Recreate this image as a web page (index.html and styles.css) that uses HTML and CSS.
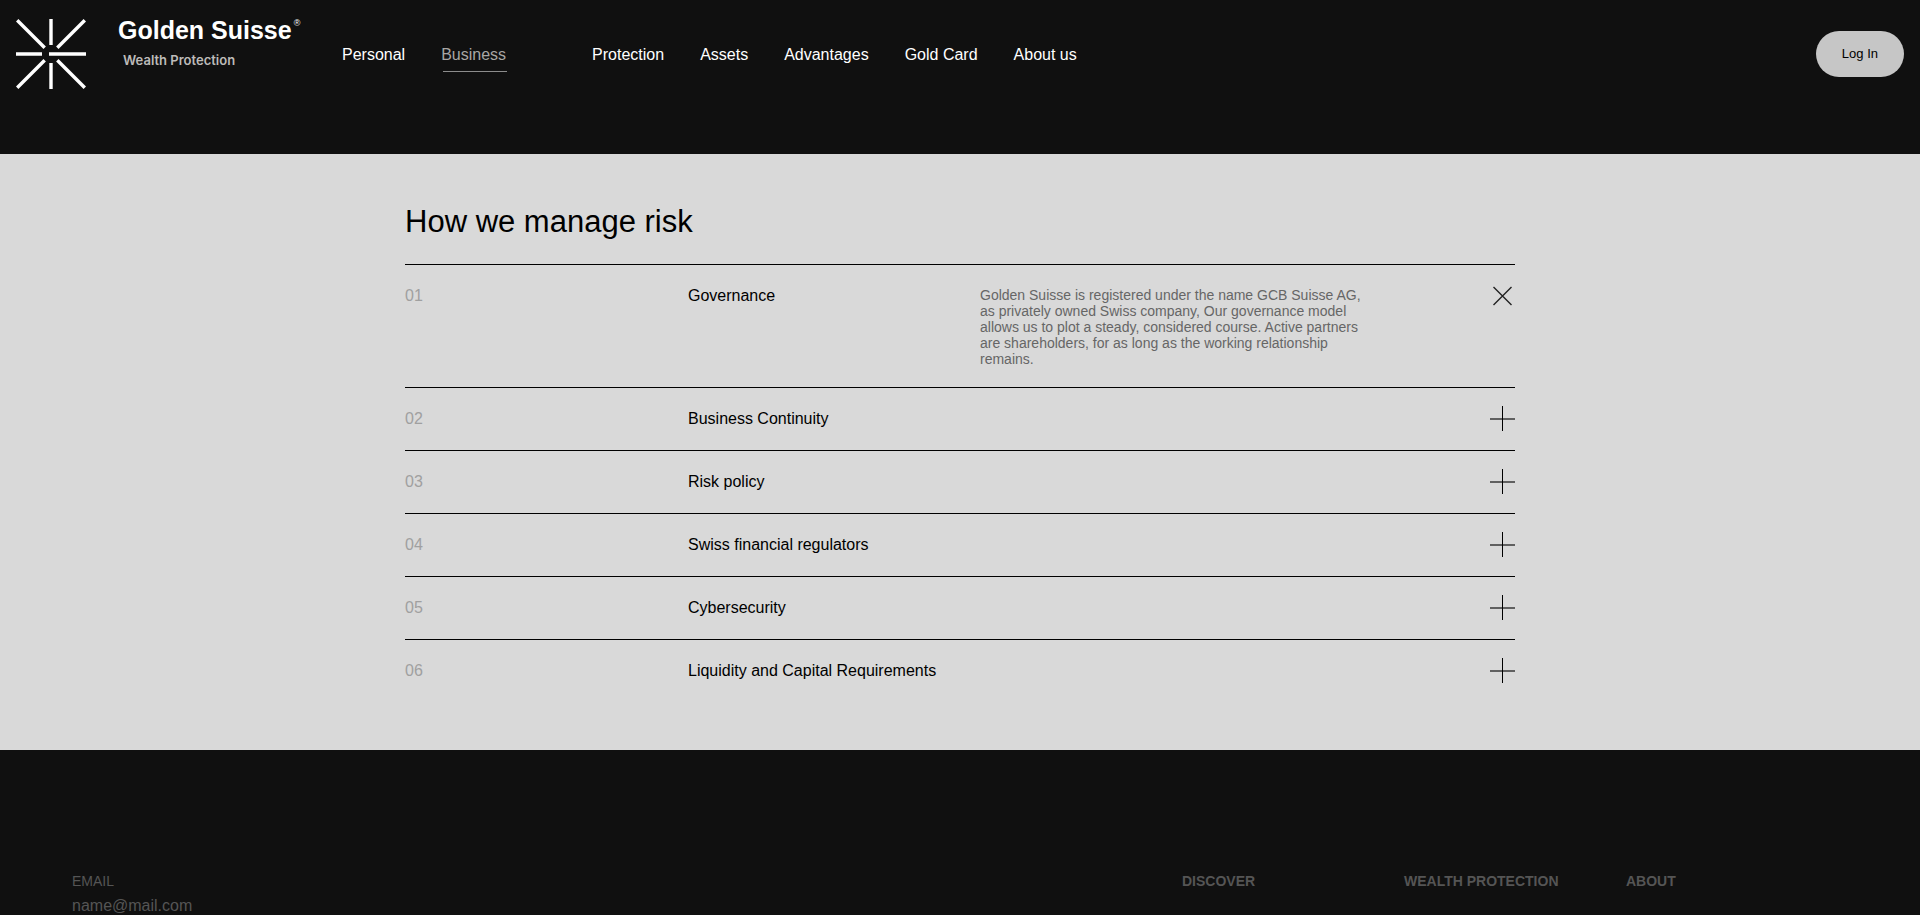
FILE: index.html
```
<!DOCTYPE html>
<html lang="en">
<head>
<meta charset="utf-8">
<title>Golden Suisse – How we manage risk</title>
<link rel="stylesheet" href="styles.css">
</head>
<body>
<header class="header">
  <a class="brand" href="#">
    <svg class="brand-mark" viewBox="0 0 70 70" aria-hidden="true">
      <path d="M35 0V26M35 44V70M0 35H26M33 35H70M1.2 1.2L28.7 28.7M68.800 1.2L41.300 28.7M1.200 68.800L28.700 41.300M68.800 68.800L41.300 41.300"/>
    </svg>
    <span class="brand-text">
      <span class="brand-name">Golden Suisse<sup class="brand-reg">®</sup></span>
      <span class="brand-sub">Wealth Protection</span>
    </span>
  </a>
  <nav class="nav">
    <div class="nav-group">
      <a class="nav-link" href="#">Personal</a>
      <a class="nav-link nav-link-active" href="#">Business</a>
    </div>
    <div class="nav-group">
      <a class="nav-link" href="#">Protection</a>
      <a class="nav-link" href="#">Assets</a>
      <a class="nav-link" href="#">Advantages</a>
      <a class="nav-link" href="#">Gold Card</a>
      <a class="nav-link" href="#">About us</a>
    </div>
  </nav>
  <button class="login" type="button">Log In</button>
</header>

<main class="main">
  <section class="risk">
    <h1 class="title">How we manage risk</h1>
    <div class="item">
      <span class="num">01</span>
      <h2 class="name">Governance</h2>
      <p class="desc">Golden Suisse is registered under the name GCB Suisse AG, as privately owned Swiss company, Our governance model allows us to plot a steady, considered course. Active partners are shareholders, for as long as the working relationship remains.</p>
      <button class="toggle" type="button" aria-label="Close Governance"><svg class="icon icon-close" viewBox="0 0 25 25"><path d="M3.500 4L21.500 22M21.500 4L3.500 22"/></svg></button>
    </div>
    <div class="item">
      <span class="num">02</span>
      <h2 class="name">Business Continuity</h2>
      <button class="toggle" type="button" aria-label="Open Business Continuity"><svg class="icon" viewBox="0 0 25 25"><path class="bar" d="M0 13H25"/><path d="M12.500 0V25"/></svg></button>
    </div>
    <div class="item">
      <span class="num">03</span>
      <h2 class="name">Risk policy</h2>
      <button class="toggle" type="button" aria-label="Open Risk policy"><svg class="icon" viewBox="0 0 25 25"><path class="bar" d="M0 13H25"/><path d="M12.500 0V25"/></svg></button>
    </div>
    <div class="item">
      <span class="num">04</span>
      <h2 class="name">Swiss financial regulators</h2>
      <button class="toggle" type="button" aria-label="Open Swiss financial regulators"><svg class="icon" viewBox="0 0 25 25"><path class="bar" d="M0 13H25"/><path d="M12.500 0V25"/></svg></button>
    </div>
    <div class="item">
      <span class="num">05</span>
      <h2 class="name">Cybersecurity</h2>
      <button class="toggle" type="button" aria-label="Open Cybersecurity"><svg class="icon" viewBox="0 0 25 25"><path class="bar" d="M0 13H25"/><path d="M12.500 0V25"/></svg></button>
    </div>
    <div class="item">
      <span class="num">06</span>
      <h2 class="name">Liquidity and Capital Requirements</h2>
      <button class="toggle" type="button" aria-label="Open Liquidity and Capital Requirements"><svg class="icon" viewBox="0 0 25 25"><path class="bar" d="M0 13H25"/><path d="M12.500 0V25"/></svg></button>
    </div>
  </section>
</main>

<footer class="footer">
  <form class="signup">
    <label class="signup-label" for="email">EMAIL</label>
    <input class="signup-input" id="email" type="email" placeholder="name@mail.com">
  </form>
  <h3 class="foot-title">DISCOVER</h3>
  <h3 class="foot-title">WEALTH PROTECTION</h3>
  <h3 class="foot-title">ABOUT</h3>
</footer>
</body>
</html>
```
FILE: styles.css
```
* {
  box-sizing: border-box;
}

body {
  margin: 0;
  background: #101010;
  color: #000;
  font-family: "Liberation Sans", Arial, sans-serif;
  font-size: 16px;
}

h1, h2, h3, p {
  margin: 0;
  font-weight: 400;
}

a {
  color: inherit;
  text-decoration: none;
}

button {
  border: 0;
  font-family: inherit;
  cursor: pointer;
}

.header {
  display: flex;
  align-items: center;
  padding: 19px 16px 65px;
  color: #fff;
}

.brand {
  display: flex;
  gap: 32px;
  width: 326px;
  height: 70px;
}

.brand-mark {
  width: 70px;
  height: 70px;
  fill: none;
  stroke: #fff;
  stroke-width: 3.4;
}

.brand-text {
  display: flex;
  flex-direction: column;
  gap: 10px;
}

.brand-name {
  display: flex;
  gap: 2px;
  font-size: 25px;
  line-height: 22px;
  font-weight: 700;
}

.brand-reg {
  font-size: 9px;
  line-height: 8px;
  font-weight: 400;
}

.brand-sub {
  padding-left: 5px;
  color: #bdbbb9;
  font-family: Inter, "Liberation Sans", sans-serif;
  font-size: 13px;
  line-height: 18px;
  font-weight: 600;
}

.nav {
  display: flex;
  gap: 86px;
}

.nav-group {
  display: flex;
  gap: 36px;
}

.nav-link {
  position: relative;
  padding-top: 2px;
  line-height: 20px;
}

.nav-link-active {
  color: #a8a6a4;
}

.nav-link-active::after {
  content: "";
  position: absolute;
  left: 2px;
  right: -1px;
  bottom: -7px;
  height: 1px;
  background: #8c8c8c;
}

.login {
  margin-left: auto;
  padding: 0 26px;
  border-radius: 23px;
  background: #c6c6c6;
  color: #000;
  font-size: 13px;
  line-height: 46px;
}

.main {
  padding: 48px 24px;
  background: #d9d9d9;
}

.risk {
  max-width: 1110px;
  margin: 0 auto;
}

.title {
  padding-bottom: 22px;
  font-size: 31px;
  line-height: 40px;
}

.item {
  display: grid;
  grid-template-columns: 283px 292px 1fr 25px;
  align-items: start;
  padding: 18px 0 19px;
  border-top: 1px solid #000;
  line-height: 25px;
}

.num {
  color: #a0a0a0;
}

.name {
  font-size: 16px;
}

.desc {
  max-width: 390px;
  padding: 4px 0 1px;
  color: #666;
  font-size: 14px;
  line-height: 16px;
}

.toggle {
  grid-column: 4;
  padding: 0;
  background: none;
  line-height: 0;
}

.icon {
  width: 25px;
  height: 25px;
  fill: none;
  stroke: #000;
  stroke-width: 1;
}

.icon-close {
  stroke: #222;
  stroke-width: 1.4;
}

.bar {
  stroke: #606060;
  stroke-width: 2;
}

.footer {
  display: grid;
  grid-template-columns: 5fr 1fr 1fr 1fr;
  padding: 123px 72px 0;
  color: #555;
  font-size: 14px;
  line-height: 16px;
}

.signup {
  display: flex;
  flex-direction: column;
  gap: 8px;
}

.signup-input {
  padding: 0;
  border: 0;
  outline: 0;
  background: none;
  color: #555;
  font-family: inherit;
  font-size: 16px;
  line-height: 18px;
  height: 18px;
}

.signup-input::placeholder {
  color: #555;
  opacity: 1;
}

.foot-title {
  font-size: 14px;
  font-weight: 700;
  white-space: nowrap;
}
```
